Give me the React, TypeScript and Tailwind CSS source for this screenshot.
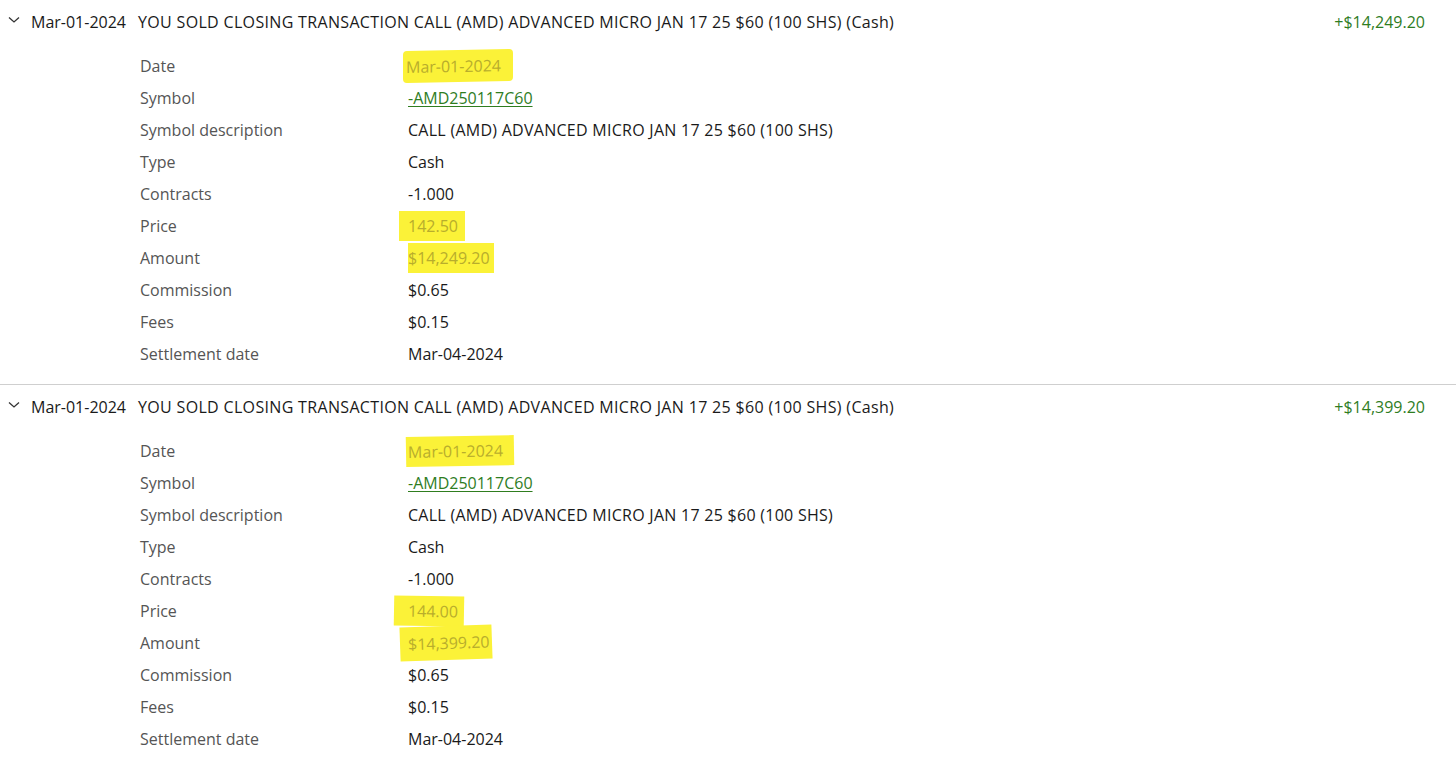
import React from "react";

type Detail = {
  label: string;
  value: string;
  kind?: "link" | "mark" | "caps";
  mark?: string;
};

type Txn = {
  date: string;
  title: string;
  amount: string;
  details: Detail[];
};

const txns: Txn[] = [
  {
    date: "Mar-01-2024",
    title:
      "YOU SOLD CLOSING TRANSACTION CALL (AMD) ADVANCED MICRO JAN 17 25 $60 (100 SHS) (Cash)",
    amount: "+$14,249.20",
    details: [
      { label: "Date", value: "Mar-01-2024", kind: "mark", mark: "pl-[3px] pr-[12px] -ml-[5px] py-[5px] -skew-y-1 rounded-sm" },
      { label: "Symbol", value: "-AMD250117C60", kind: "link" },
      { label: "Symbol description", value: "CALL (AMD) ADVANCED MICRO JAN 17 25 $60 (100 SHS)", kind: "caps" },
      { label: "Type", value: "Cash" },
      { label: "Contracts", value: "-1.000" },
      { label: "Price", value: "142.50", kind: "mark", mark: "pl-[9px] pr-[7px] -ml-[9px] py-[4px]" },
      { label: "Amount", value: "$14,249.20", kind: "mark", mark: "pl-0 pr-[4px] py-[4px]" },
      { label: "Commission", value: "$0.65" },
      { label: "Fees", value: "$0.15" },
      { label: "Settlement date", value: "Mar-04-2024" },
    ],
  },
  {
    date: "Mar-01-2024",
    title:
      "YOU SOLD CLOSING TRANSACTION CALL (AMD) ADVANCED MICRO JAN 17 25 $60 (100 SHS) (Cash)",
    amount: "+$14,399.20",
    details: [
      { label: "Date", value: "Mar-01-2024", kind: "mark", mark: "pl-[2px] pr-[11px] -ml-[2px] py-[4px] -rotate-1" },
      { label: "Symbol", value: "-AMD250117C60", kind: "link" },
      { label: "Symbol description", value: "CALL (AMD) ADVANCED MICRO JAN 17 25 $60 (100 SHS)", kind: "caps" },
      { label: "Type", value: "Cash" },
      { label: "Contracts", value: "-1.000" },
      { label: "Price", value: "144.00", kind: "mark", mark: "pl-[14px] pr-[6px] -ml-[14px] py-[4px] rotate-1" },
      { label: "Amount", value: "$14,399.20", kind: "mark", mark: "pl-[8px] pr-[2px] -ml-[8px] py-[6px] -rotate-2" },
      { label: "Commission", value: "$0.65" },
      { label: "Fees", value: "$0.15" },
      { label: "Settlement date", value: "Mar-04-2024" },
    ],
  },
];

function Chevron() {
  return (
    <svg width="12" height="8" viewBox="0 0 12 8" className="shrink-0">
      <path d="M1 1.5 L6 6 L11 1.5" fill="none" stroke="#333" strokeWidth="1.3" />
    </svg>
  );
}

function DetailValue({ d }: { d: Detail }) {
  if (d.kind === "link") {
    return <span className="text-[#2f7d1f] underline underline-offset-2">{d.value}</span>;
  }
  if (d.kind === "mark") {
    return (
      <span className={`inline-block bg-[#fbf238] text-[#b8ad2c] leading-[22px] ${d.mark}`}>
        {d.value}
      </span>
    );
  }
  if (d.kind === "caps") {
    return <span className="text-[#1a1a1a] tracking-[0.27px]">{d.value}</span>;
  }
  return <span className="text-[#1a1a1a]">{d.value}</span>;
}

function TxnBlock({ t, last }: { t: Txn; last: boolean }) {
  return (
    <div className={last ? "pb-[14px]" : "pb-[14px] border-b border-[#cfcfcf]"}>
      {/* Header row */}
      <div className="flex items-center h-[44px] pl-[8px] pr-[31px]">
        <div className="w-[23px] -mt-[5px]">
          <Chevron />
        </div>
        <div className="w-[107px] text-[#1a1a1a]">{t.date}</div>
        <div className="flex-1 text-[#1a1a1a] tracking-[0.33px]">{t.title}</div>
        <div className="text-[#2f7d1f]">{t.amount}</div>
      </div>

      {/* Details */}
      <div className="mt-[6px] pl-[140px]">
        {t.details.map((d) => (
          <div key={d.label} className="flex items-center h-[32px]">
            <div className="w-[268px] text-[#555555]">{d.label}</div>
            <div>
              <DetailValue d={d} />
            </div>
          </div>
        ))}
      </div>
    </div>
  );
}

export default function App() {
  return (
    <div className="min-h-screen bg-white text-[16px] font-['Open_Sans',sans-serif]">
      {txns.map((t, i) => (
        <TxnBlock key={i} t={t} last={i === txns.length - 1} />
      ))}
    </div>
  );
}
